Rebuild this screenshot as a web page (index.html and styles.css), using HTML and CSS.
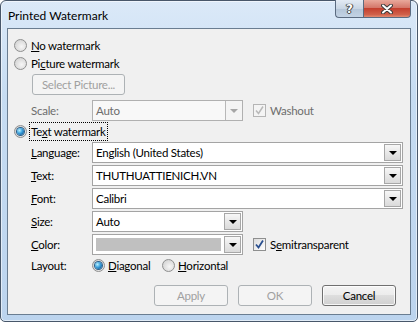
FILE: index.html
```html
<!DOCTYPE html>
<html lang="en">
<head>
  <meta charset="UTF-8" />
  <title>Printed Watermark</title>
  <link rel="stylesheet" href="styles.css">
</head>
<body>
  <div class="window">
    <div class="titlebar">
      <span class="title">Printed Watermark</span>
      <div class="caption-buttons">
        <span class="cap help">?</span>
        <span class="cap close">
          <svg width="12" height="10" viewBox="0 0 12 10">
            <path d="M2 1.5 L10 8.5 M10 1.5 L2 8.5" stroke="#3b3b3b" stroke-width="4" stroke-linecap="round"/>
            <path d="M2 1.5 L10 8.5 M10 1.5 L2 8.5" stroke="#ffffff" stroke-width="2" stroke-linecap="round"/>
          </svg>
        </span>
      </div>
    </div>

    <div class="client">
      <div class="option">
        <span class="radio"></span>
        <span><u>N</u>o watermark</span>
      </div>
      <div class="option">
        <span class="radio"></span>
        <span>Pi<u>c</u>ture watermark</span>
      </div>
      <div class="btn disabled select-picture">Select Picture...</div>

      <div class="field scale-row">
        <span class="label disabled-text">Scale:</span>
        <div class="combo short disabled">
          <span class="value">Auto</span>
          <span class="drop"></span>
        </div>
        <span class="check disabled">
          <svg width="11" height="11" viewBox="0 0 11 11"><path d="M2 5.5 L4.5 8.5 L9 1.5" fill="none" stroke="#b9b9b9" stroke-width="1.5"/></svg>
        </span>
        <span class="disabled-text">Washout</span>
      </div>

      <div class="option text-option">
        <span class="radio checked"></span>
        <span class="focus">Te<u>x</u>t watermark</span>
      </div>

      <div class="field">
        <span class="label"><u>L</u>anguage:</span>
        <div class="combo long">
          <span class="value">English (United States)</span>
          <span class="drop"></span>
        </div>
      </div>
      <div class="field">
        <span class="label"><u>T</u>ext:</span>
        <div class="combo long">
          <span class="value">THUTHUATTIENICH.VN</span>
          <span class="drop"></span>
        </div>
      </div>
      <div class="field">
        <span class="label"><u>F</u>ont:</span>
        <div class="combo long">
          <span class="value">Calibri</span>
          <span class="drop"></span>
        </div>
      </div>
      <div class="field">
        <span class="label"><u>S</u>ize:</span>
        <div class="combo short">
          <span class="value">Auto</span>
          <span class="drop"></span>
        </div>
      </div>
      <div class="field">
        <span class="label"><u>C</u>olor:</span>
        <div class="combo short">
          <span class="swatch"></span>
          <span class="drop"></span>
        </div>
        <span class="check">
          <svg width="11" height="11" viewBox="0 0 11 11"><path d="M2 5.5 L4.5 8.5 L9 1.5" fill="none" stroke="#2a4f8f" stroke-width="1.8"/></svg>
        </span>
        <span>S<u>e</u>mitransparent</span>
      </div>
      <div class="field layout-row">
        <span class="label">Layout:</span>
        <span class="radio checked"></span>
        <span class="radio-text"><u>D</u>iagonal</span>
        <span class="radio"></span>
        <span class="radio-text"><u>H</u>orizontal</span>
      </div>

      <div class="actions">
        <div class="btn disabled">Apply</div>
        <div class="btn disabled">OK</div>
        <div class="btn">Cancel</div>
      </div>
    </div>
  </div>
</body>
</html>
```

FILE: styles.css
```css
body {
  margin: 0;
  font-family: "Segoe UI", Lato, "Liberation Sans", sans-serif;
  font-size: 11.5px;
  letter-spacing: -0.25px;
  color: #000;
  background: #fff;
}

.window {
  width: 418px;
  height: 322px;
  box-sizing: border-box;
  border: 1px solid #48576a;
  border-radius: 6px 6px 5px 5px;
  background: linear-gradient(to bottom, #dbe9f8, #c6dcf2 30%, #bcd4ee);
  box-shadow: inset 0 0 0 1px rgba(255, 255, 255, 0.55);
  display: flex;
  flex-direction: column;
}

.titlebar {
  height: 27px;
  display: flex;
  align-items: flex-start;
  padding-left: 7px;
}

.title {
  margin-top: 7px;
  font-size: 12px;
  letter-spacing: 0;
  color: #000;
}

.caption-buttons {
  margin-left: auto;
  margin-right: 6px;
  margin-top: -1px;
  display: flex;
}

.cap {
  height: 18px;
  display: flex;
  align-items: center;
  justify-content: center;
  box-sizing: border-box;
  border: 1px solid #5b6b80;
  border-top: none;
}

.help {
  width: 28px;
  border-radius: 0 0 0 4px;
  border-right: none;
  background: linear-gradient(to bottom, #e3ebf4, #c9d6e4 50%, #b4c5d8 51%, #c3d3e4);
  color: #fff;
  font-family: "DejaVu Sans", sans-serif;
  font-weight: bold;
  font-size: 12px;
  letter-spacing: 0;
  text-shadow: 0 0 1px #333, 0 0 1px #333, 1px 0 0 #555, -1px 0 0 #555, 0 1px 0 #555;
}

.close {
  width: 48px;
  border-radius: 0 0 4px 0;
  background: linear-gradient(to bottom, #e9a99c, #d4776a 45%, #c4402f 50%, #d0604a 85%, #e38a70);
}

.client {
  flex: 1;
  margin: 0 6px 6px;
  border: 1px solid #6a7d91;
  background: #f0f0f0;
  padding: 7px 0 0 6px;
}

.option {
  height: 18px;
  display: flex;
  align-items: center;
  gap: 4px;
}

.radio {
  width: 13px;
  height: 13px;
  box-sizing: border-box;
  border-radius: 50%;
  border: 1px solid #8e8f8f;
  background: radial-gradient(circle at 60% 60%, #f6f6f6, #d8d8d8 70%, #cfcfcf);
  display: inline-flex;
  align-items: center;
  justify-content: center;
  flex: none;
}

.radio.checked::after {
  content: "";
  width: 7px;
  height: 7px;
  border-radius: 50%;
  background: radial-gradient(circle at 35% 35%, #b8f0ff, #3aa0dc 45%, #0d4f8a 90%);
  box-shadow: 0 0 0 1px #2b5f8a;
}

.btn {
  width: 74px;
  height: 21px;
  box-sizing: border-box;
  border: 1px solid #707070;
  border-radius: 3px;
  background: linear-gradient(to bottom, #f4f4f4, #ececec 48%, #dedede 50%, #d0d0d0);
  box-shadow: inset 0 0 0 1px rgba(255, 255, 255, 0.8);
  display: flex;
  align-items: center;
  justify-content: center;
}

.btn.disabled {
  border-color: #adb2b5;
  background: #f4f4f4;
  box-shadow: none;
  color: #a0a0a0;
}

.select-picture {
  width: 93px;
  margin: 2px 0 0 18px;
}

.field {
  display: flex;
  align-items: center;
  height: 21px;
  margin-top: 2px;
  padding-left: 17px;
}

.scale-row {
  margin-top: 5px;
}

.text-option {
  margin-top: 1px;
}

.label {
  width: 61px;
  flex: none;
}

.disabled-text {
  color: #6d6d6d;
}

.focus {
  outline: 1px dotted #000;
  outline-offset: 0;
  padding: 0 1px;
  margin-left: -1px;
  line-height: 17px;
}

.combo {
  display: flex;
  height: 21px;
  box-sizing: border-box;
  border: 1px solid #a4a4a4;
  background: #fff;
}

.combo.long {
  width: 311px;
}

.combo.short {
  width: 151px;
}

.combo .value {
  flex: 1;
  padding-left: 3px;
  line-height: 19px;
}

.combo .drop {
  width: 17px;
  margin: 1px;
  box-sizing: border-box;
  border: 1px solid #a7a7a7;
  background: linear-gradient(to bottom, #f7f7f7, #e8e8e8 50%, #dadada);
  display: flex;
  align-items: center;
  justify-content: center;
}

.combo .drop::after {
  content: "";
  border-left: 4px solid transparent;
  border-right: 4px solid transparent;
  border-top: 4px solid #000;
}

.combo.disabled {
  border-color: #b0b0b0;
  background: #f8f8f8;
  color: #6d6d6d;
}

.combo.disabled .drop {
  margin: 0;
  border: none;
  border-left: 1px solid #b8b8b8;
  background: #f4f4f4;
}

.combo.disabled .drop::after {
  border-top-color: #a6a6a6;
}

.combo .swatch {
  flex: 1;
  margin: 3px 2px 3px 3px;
  background: #c0c0c0;
}

.check {
  width: 13px;
  height: 13px;
  box-sizing: border-box;
  border: 1px solid #8e8f8f;
  background: linear-gradient(135deg, #dcdcdc, #ffffff);
  margin: 0 4px 0 10px;
  display: inline-flex;
  align-items: center;
  justify-content: center;
  flex: none;
}

.check.disabled {
  border-color: #b5b5b5;
  background: #f4f4f4;
}

.layout-row {
  height: 20px;
  margin-top: 0;
}

.radio-text {
  margin: 0 0 0 3px;
  width: 54px;
}

.actions {
  display: flex;
  gap: 10px;
  justify-content: flex-end;
  margin: 10px 14px 0 0;
}
```
